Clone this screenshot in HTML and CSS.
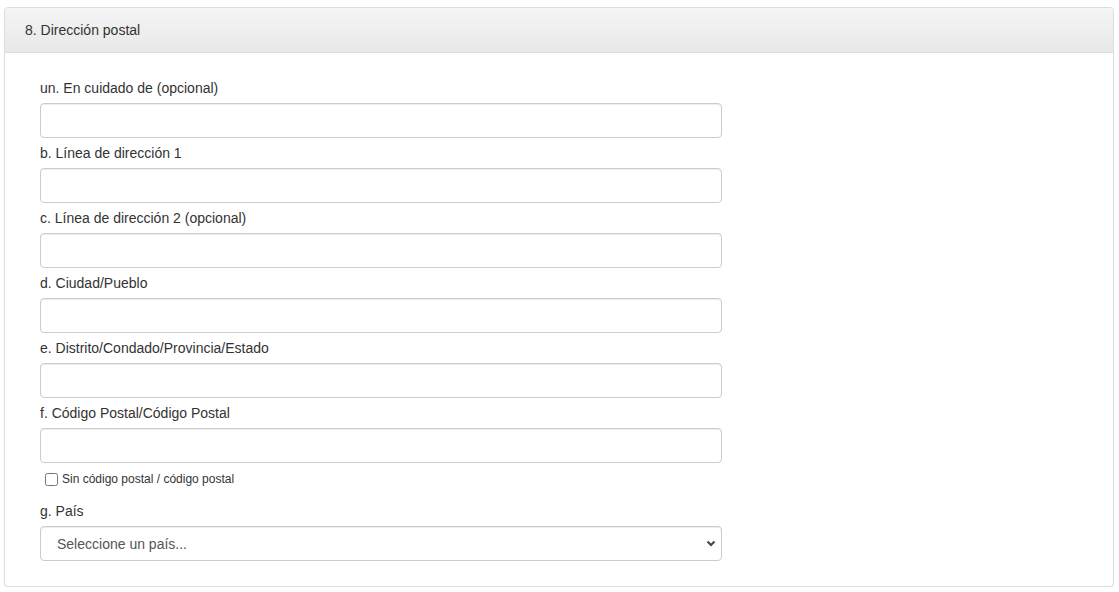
FILE: index.html
```html
<!DOCTYPE html>
<html lang="es">
<head>
<meta charset="utf-8">
<title>Dirección postal</title>
<link rel="stylesheet" href="styles.css">
</head>
<body>
<div class="panel">
  <div class="panel-heading">8. Dirección postal</div>
  <div class="panel-body">
    <div class="form-group">
      <label class="field-label">un. En cuidado de (opcional)</label>
      <input class="form-control" type="text">
    </div>
    <div class="form-group">
      <label class="field-label">b. Línea de dirección 1</label>
      <input class="form-control" type="text">
    </div>
    <div class="form-group">
      <label class="field-label">c. Línea de dirección 2 (opcional)</label>
      <input class="form-control" type="text">
    </div>
    <div class="form-group">
      <label class="field-label">d. Ciudad/Pueblo</label>
      <input class="form-control" type="text">
    </div>
    <div class="form-group">
      <label class="field-label">e. Distrito/Condado/Provincia/Estado</label>
      <input class="form-control" type="text">
    </div>
    <div class="form-group">
      <label class="field-label">f. Código Postal/Código Postal</label>
      <input class="form-control" type="text">
      <label class="check-row"><input type="checkbox" class="check"><span>Sin código postal / código postal</span></label>
    </div>
    <div class="form-group last">
      <label class="field-label">g. País</label>
      <div class="select-wrap">
        <select class="form-control select">
          <option>Seleccione un país...</option>
        </select>
        <svg class="chevron" width="10" height="7" viewBox="0 0 10 7"><path d="M1.5 1.5 L5 5 L8.5 1.5" fill="none" stroke="#444" stroke-width="2"/></svg>
      </div>
    </div>
  </div>
</div>
</body>
</html>
```
FILE: styles.css
```css
* { box-sizing: border-box; }
html, body { margin: 0; padding: 0; background: #fff; }
body {
  padding: 7px 5px 0 4px;
  font-family: "Liberation Sans", Arial, sans-serif;
  font-size: 14px;
  color: #333;
  line-height: 20px;
}
.panel {
  border: 1px solid #ddd;
  border-radius: 4px;
  background: #fff;
  box-shadow: 0 1px 1px rgba(0,0,0,0.05);
}
.panel-heading {
  height: 45px;
  padding: 12px 20px;
  background: linear-gradient(#f5f5f5, #e8e8e8);
  border-bottom: 1px solid #ddd;
  border-radius: 3px 3px 0 0;
  color: #333;
}
.panel-body {
  padding: 25px 35px 25px 35px;
}
.form-group { margin-bottom: 5px; width: 682px; }
.form-group.last { margin-bottom: 0; }
.field-label {
  display: block;
  margin-bottom: 5px;
  font-weight: normal;
}
.form-control {
  display: block;
  width: 682px;
  height: 35px;
  padding: 6px 12px;
  border: 1px solid #ccc;
  border-radius: 4px;
  background: #fff;
  font-family: inherit;
  font-size: 14px;
  color: #555;
  box-shadow: inset 0 1px 1px rgba(0,0,0,0.075);
}
.check-row {
  display: flex;
  align-items: center;
  margin: 8px 0 14px 5px;
  font-size: 12px;
  line-height: 16px;
  color: #333;
}
.check {
  margin: 0 4px 0 0;
  width: 13px;
  height: 13px;
}
.select-wrap { position: relative; }
.select {
  appearance: none;
  -webkit-appearance: none;
  padding-left: 16px;
  color: #555;
}
.chevron {
  position: absolute;
  right: 6px;
  top: 14px;
  pointer-events: none;
}
```
